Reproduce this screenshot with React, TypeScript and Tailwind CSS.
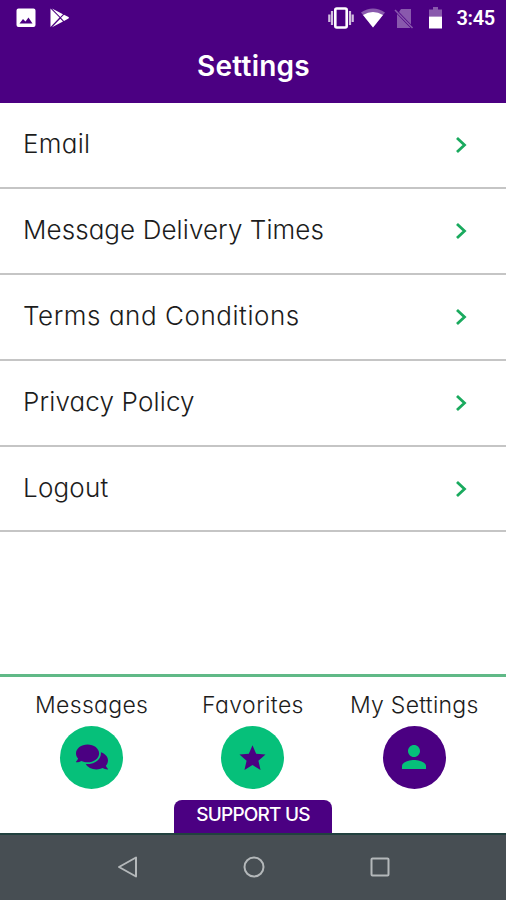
import React from "react";
import clsx from "clsx";
import { FaComments } from "react-icons/fa";
import { IoMdPerson, IoMdStar } from "react-icons/io";

type SettingsRow = {
    title: string;
    spacing: string;
};

type TabItem = {
    title: string;
    spacing: string;
    icon: React.ReactNode;
    active?: boolean;
};

const rows: SettingsRow[] = [
    { title: "Email", spacing: "tracking-[0.300px]" },
    { title: "Message Delivery Times", spacing: "tracking-[0.080px]" },
    { title: "Terms and Conditions", spacing: "tracking-[0.550px]" },
    { title: "Privacy Policy", spacing: "tracking-[0.150px]" },
    { title: "Logout", spacing: "tracking-[0.200px]" },
];

const tabs: TabItem[] = [
    { title: "Messages", spacing: "tracking-[0.300px]", icon: <FaComments size={32} /> },
    { title: "Favorites", spacing: "tracking-[0.400px]", icon: <IoMdStar size={33} /> },
    { title: "My Settings", spacing: "tracking-[0.250px]", icon: <IoMdPerson size={32} />, active: true },
];

function StatusBar() {
    return (
        <div className="flex h-9 items-center justify-between pl-4 pr-[11px] text-white">
            <div className="flex items-center gap-[14px]">
                <svg width="20" height="20" viewBox="0 0 20 20">
                    <path
                        fill="currentColor"
                        fillRule="evenodd"
                        d="M2.5 0.5h15a2 2 0 0 1 2 2v14.500a2 2 0 0 1-2 2h-15a2 2 0 0 1-2-2v-14.500a2 2 0 0 1 2-2zM3.500 15.500h13l-4-6-3 4-2.500-2.500z"
                    />
                </svg>
                <svg width="20" height="20" viewBox="0 0 20 20">
                    <path fill="currentColor" d="M0.500 0.500l9 9-9 9.500zM2 0.500l11 5.800-2.700 2.600zM14 6.800l4.500 2.200q1 .8 0 1.600l-4.500 2.400-3-3.200zM10.300 10.700l2.700 2.700-11 5.800z" />
                </svg>
            </div>
            <div className="flex items-center">
                <svg width="27" height="22" viewBox="0 0 27 22">
                    <rect x="7.300" y="1.500" width="11.400" height="19" rx="1.500" fill="none" stroke="currentColor" strokeWidth="2.600" />
                    <path d="M4 4v14M22 4v14M1.300 7.500v7.500M24.700 7.500v7.500" stroke="currentColor" strokeWidth="2.200" opacity="0.750" />
                </svg>
                <svg className="ml-[6px]" width="24" height="20" viewBox="0 0 24 20">
                    <path d="M0 4.500q12-8 24 0l-12 15z" fill="currentColor" opacity="0.350" />
                    <path d="M2 7q10-6 20 0l-10 12.500z" fill="currentColor" />
                </svg>
                <svg className="ml-[9px]" width="20" height="21" viewBox="0 0 20 21">
                    <path d="M7 1h10v15.500l-12-12.500zM3 6l13.500 14h-13.500z" fill="currentColor" opacity="0.350" />
                    <path d="M1 2l17.500 18" stroke="currentColor" strokeWidth="1.500" opacity="0.350" />
                </svg>
                <svg className="ml-[15px]" width="13" height="22" viewBox="0 0 13 22">
                    <path d="M4 0h5v2.500h4v7h-13v-7h4z" fill="currentColor" opacity="0.350" />
                    <path d="M0 9.500h13v12h-13z" fill="currentColor" />
                </svg>
                <span className="ml-[14px] font-[Roboto] text-[20px] font-semibold leading-6 tracking-[-0.300px]">3:45</span>
            </div>
        </div>
    );
}

function SettingsList() {
    return (
        <ul>
            {rows.map((row) => (
                <li
                    key={row.title}
                    className="flex h-[85.900px] items-center justify-between border-b-2 border-[#c5c5c5] pl-[23px] pr-[38px]"
                >
                    <span className={clsx("pb-[2px] text-[26px] font-light leading-8 text-[#1c1c1c]", row.spacing)}>
                        {row.title}
                    </span>
                    <svg width="13" height="18" viewBox="0 0 13 18">
                        <path d="M2 2l7.500 7-7.500 7" fill="none" stroke="#1aaa5e" strokeWidth="2.800" />
                    </svg>
                </li>
            ))}
        </ul>
    );
}

function TabBar() {
    return (
        <nav className="flex h-[123px] pl-[11px] pr-[11px] pt-3">
            {tabs.map((tab) => (
                <div key={tab.title} className="flex flex-1 flex-col items-center">
                    <span className={clsx("whitespace-nowrap text-[23px] font-light leading-8 text-[#1c1c1c]", tab.spacing)}>
                        {tab.title}
                    </span>
                    <div
                        className={clsx(
                            "mt-[5px] flex size-[63px] items-center justify-center rounded-full pb-px",
                            tab.active ? "bg-[#4b0082] text-[#06c07a]" : "bg-[#06c07a] text-[#4b0082]"
                        )}
                    >
                        {tab.icon}
                    </div>
                </div>
            ))}
        </nav>
    );
}

function NavigationBar() {
    return (
        <div className="flex h-[67px] items-center justify-center gap-[104px] border-t-2 border-[#21413f] bg-[#474e53] pb-[2px] pl-px">
            <svg width="22" height="24" viewBox="0 0 22 24">
                <path d="M19 2.500v19l-17-9.500z" fill="none" stroke="#b4b8ba" strokeWidth="2" strokeLinejoin="round" />
            </svg>
            <svg width="22" height="22" viewBox="0 0 22 22">
                <circle cx="11" cy="11" r="9.500" fill="none" stroke="#b4b8ba" strokeWidth="2" />
            </svg>
            <svg width="22" height="22" viewBox="0 0 22 22">
                <rect x="2.500" y="2.500" width="17" height="17" rx="1" fill="none" stroke="#b4b8ba" strokeWidth="2" />
            </svg>
        </div>
    );
}

export default function App() {
    return (
        <div className="flex h-[900px] w-[506px] flex-col bg-white font-[Inter,sans-serif] [font-feature-settings:'cv11']">
            <header className="h-[103px] shrink-0 bg-[#4b0082]">
                <StatusBar />
                <h1 className="mt-[12px] pl-px text-center text-[28px] font-semibold leading-9 tracking-[0.250px] text-white">
                    Settings
                </h1>
            </header>

            <main className="flex-1">
                <SettingsList />
            </main>

            <div className="border-t-[3px] border-[#60b987]">
                <TabBar />
                <button className="mx-auto flex h-[33px] w-[158px] items-center justify-center rounded-t-lg bg-[#4b0082] pb-[3px] text-[19px] font-medium tracking-[-0.800px] text-white">
                    SUPPORT US
                </button>
            </div>
            <NavigationBar />
        </div>
    );
}
